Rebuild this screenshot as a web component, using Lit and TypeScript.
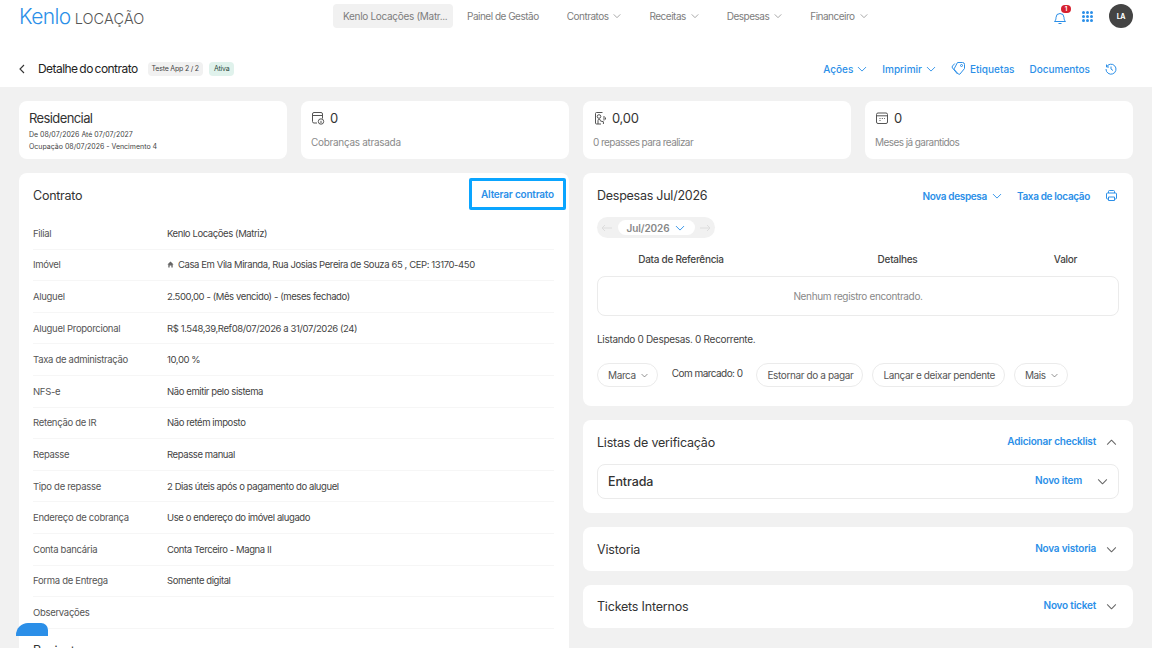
import { LitElement, html, css, svg } from "lit";
import { customElement } from "lit/decorators.js";

const chevron = (size = 10, color = "#2b8fe8") => html`<svg class="chev" width=${size} height=${size} viewBox="0 0 12 12" fill="none" stroke=${color} stroke-width="1.1" stroke-linecap="round" stroke-linejoin="round"><path d="M1.5 4l4.5 4.5L10.5 4"/></svg>`;

const contractRows: [string, string][] = [
  ["Filial", "Kenlo Locações (Matriz)"],
  ["Imóvel", "Casa Em Vila Miranda, Rua Josias Pereira de Souza 65 , CEP: 13170-450"],
  ["Aluguel", "2.500,00 - (Mês vencido) - (meses fechado)"],
  ["Aluguel Proporcional", "R$ 1.548,39,Ref08/07/2026 a 31/07/2026 (24)"],
  ["Taxa de administração", "10,00 %"],
  ["NFS-e", "Não emitir pelo sistema"],
  ["Retenção de IR", "Não retém imposto"],
  ["Repasse", "Repasse manual"],
  ["Tipo de repasse", "2 Dias úteis após o pagamento do aluguel"],
  ["Endereço de cobrança", "Use o endereço do imóvel alugado"],
  ["Conta bancária", "Conta Terceiro - Magna II"],
  ["Forma de Entrega", "Somente digital"],
  ["Observações", ""],
];

const navItems = [
  { label: "Painel de Gestão", menu: false },
  { label: "Contratos", menu: true },
  { label: "Receitas", menu: true },
  { label: "Despesas", menu: true },
  { label: "Financeiro", menu: true },
];

const statIcons = {
  late: svg`<path d="M6 12H3a1.5 1.5 0 01-1.500-1.500v-7.500A1.500 1.500 0 013 1.500h7a1.500 1.500 0 011.500 1.500v4.500"/><path d="M1.500 4.500h10"/><circle cx="10" cy="10.500" r="2.700"/><path d="M10 10v2M10 8.900v.3"/>`,
  transfer: svg`<path d="M9.500 1.500H3.500a1 1 0 00-1 1v9.500a1 1 0 001 1H8"/><circle cx="6" cy="5.500" r="1.800"/><path d="M5 13V9.500a1.200 1.200 0 012.400 0V10l3 .7v2.300M11 5v4.500M12.500 6.500v2"/>`,
  months: svg`<rect x="1.500" y="2" width="11" height="10.500" rx="1.500"/><path d="M1.500 4.800h11M4.500 7.500h1M6.800 7.500h1M9 7.500h.8M4.500 9.500h1"/>`,
};

@customElement("app-root")
export class AppRoot extends LitElement {
  static styles = css`
    :host {
      display: block;
      height: 648px;
      overflow: hidden;
      position: relative;
      background: #f1f1f1;
      font-family: Inter, "Open Sans", sans-serif;
      color: #3a3a3a;
      letter-spacing: -0.25px;
    }
    .top {
      background: #fff;
      height: 87px;
      display: flex;
      flex-direction: column;
    }
    .nav {
      height: 50px;
      display: flex;
      align-items: center;
      padding: 0 19px 18px;
      box-sizing: border-box;
    }
    .logo {
      display: flex;
      align-items: baseline;
      gap: 4px;
      width: 314px;
    }
    .logo .kenlo {
      font-size: 21px;
      color: #2b8fe8;
      letter-spacing: -0.6px;
      font-weight: 300;
    }
    .logo .loc {
      font-size: 14.5px;
      color: #555;
      letter-spacing: 0.1px;
      font-weight: 300;
    }
    .menu {
      display: flex;
      align-items: center;
      font-size: 10px;
      color: #7d7d7d;
      letter-spacing: -0.5px;
    }
    .menu .active {
      background: #f1f1f1;
      border-radius: 4px;
      height: 24px;
      width: 120px;
      box-sizing: border-box;
      padding-left: 10px;
      display: flex;
      align-items: center;
      margin-right: 14px;
      letter-spacing: -0.3px;
    }
    .menu .item {
      display: flex;
      align-items: center;
      gap: 5px;
      margin-right: 28px;
    }
    .nav-right {
      margin-left: auto;
      display: flex;
      align-items: center;
    }
    .bell {
      position: relative;
      width: 14px;
      height: 14px;
      margin-right: 15px;
    }
    .badge {
      position: absolute;
      top: -4px;
      left: 8px;
      width: 10px;
      height: 8px;
      border-radius: 4px;
      background: #d6202f;
      color: #fff;
      font-size: 6px;
      font-weight: 700;
      line-height: 8px;
      text-align: center;
    }
    .dots {
      display: grid;
      grid-template-columns: repeat(3, 3px);
      gap: 1px;
      margin-right: 16px;
      width: 11px;
    }
    .dots i {
      width: 3px;
      height: 3px;
      background: #2b8fe8;
      border-radius: 50%;
    }
    .avatar {
      width: 24px;
      height: 24px;
      border-radius: 50%;
      background: #444;
      color: #fff;
      font-size: 7px;
      font-weight: 700;
      display: flex;
      align-items: center;
      justify-content: center;
    }
    .sub {
      flex: 1;
      display: flex;
      align-items: center;
      padding: 0 35px 0 19px;
    }
    .back {
      margin-right: 13px;
      display: flex;
    }
    .sub h1 {
      margin: 0 10px 0 0;
      font-size: 12px;
      font-weight: 400;
      color: #222;
      letter-spacing: -0.55px;
      word-spacing: -1px;
    }
    .tag {
      font-size: 7px;
      height: 14px;
      line-height: 14px;
      padding: 0 4px;
      border-radius: 4px;
      background: #f1f1f1;
      margin-right: 6px;
      color: #444;
      letter-spacing: -0.2px;
    }
    .tag.green {
      background: #e0f2ec;
      color: #2c4a40;
      padding: 0 5px;
    }
    .actions {
      margin-left: auto;
      display: flex;
      align-items: center;
      font-size: 10px;
      font-weight: 500;
      color: #2b8fe8;
      letter-spacing: 0;
    }
    .actions span {
      display: flex;
      align-items: center;
      gap: 4px;
      margin-right: 15px;
    }
    .grid {
      display: grid;
      grid-template-columns: 1fr 1fr;
      gap: 14px;
      padding: 14px 19px;
    }
    .stats {
      display: grid;
      grid-template-columns: 1fr 1fr;
      gap: 14px;
    }
    .card {
      background: #fff;
      border-radius: 8px;
    }
    .stat {
      height: 58px;
      box-sizing: border-box;
      padding: 9px 10px;
    }
    .stat h2 {
      margin: 0 0 2.6px;
      font-size: 13px;
      font-weight: 400;
      line-height: 16px;
      color: #333;
      letter-spacing: -0.6px;
    }
    .stat small {
      display: block;
      font-size: 7px;
      line-height: 12.5px;
      color: #444;
      letter-spacing: 0;
    }
    .stat .val {
      display: flex;
      align-items: center;
      gap: 5px;
      font-size: 13px;
      line-height: 16px;
      color: #333;
      margin-bottom: 9px;
    }
    .stat .lbl {
      font-size: 10px;
      line-height: 14px;
      color: #8a8a8a;
      letter-spacing: -0.3px;
    }
    .stat .lbl.tight {
      letter-spacing: -0.57px;
    }
    .col {
      display: flex;
      flex-direction: column;
      gap: 14px;
    }
    .contract {
      padding: 5px 15px 0 14px;
      height: 500px;
    }
    .card-head {
      display: flex;
      align-items: center;
      justify-content: space-between;
      height: 32px;
      margin-bottom: 8px;
    }
    .card-title {
      font-size: 12.5px;
      color: #333;
      font-weight: 400;
    }
    .card-head .card-title {
      padding-top: 2px;
    }
    .focus-btn {
      font-size: 10px;
      font-weight: 600;
      color: #2b8fe8;
      border: 3px solid #0aa5ff;
      border-radius: 2px;
      height: 32px;
      width: 97px;
      box-sizing: border-box;
      margin-right: -12px;
      display: flex;
      align-items: center;
      justify-content: center;
      letter-spacing: -0.2px;
    }
    .row {
      display: flex;
      align-items: center;
      height: 31.6px;
      box-sizing: border-box;
      border-bottom: 1px solid #f6f6f6;
      font-size: 9.5px;
      letter-spacing: -0.4px;
    }
    .row .k {
      width: 134px;
      color: #555;
      letter-spacing: -0.3px;
    }
    .row .v {
      color: #444;
      display: flex;
      align-items: center;
      gap: 4px;
    }
    .next {
      margin-top: 14px;
      font-size: 12.5px;
      color: #333;
    }
    .fab {
      position: absolute;
      left: 16px;
      top: 623px;
      width: 32px;
      height: 13px;
      background: #2b8fe8;
      border-radius: 12px 7px 0 0;
    }
    .expenses {
      height: 233px;
      box-sizing: border-box;
      padding: 14px;
    }
    .exp-head {
      display: flex;
      align-items: center;
      height: 17px;
      margin-bottom: 13px;
    }
    .links {
      margin-left: auto;
      display: flex;
      align-items: center;
      font-size: 10px;
      font-weight: 600;
      color: #2b8fe8;
      letter-spacing: -0.35px;
      margin-right: 1px;
    }
    .links span {
      display: flex;
      align-items: center;
      gap: 5px;
      margin-right: 15px;
    }
    .month {
      width: 118px;
      height: 21px;
      box-sizing: border-box;
      border-radius: 11px;
      background: #f1f1f1;
      display: flex;
      align-items: center;
      justify-content: space-between;
      padding: 0 4px;
    }
    .month b {
      width: 77px;
      height: 15px;
      border-radius: 8px;
      background: #fff;
      font-size: 10px;
      font-weight: 600;
      color: #888;
      display: flex;
      align-items: center;
      justify-content: center;
      gap: 6px;
      letter-spacing: -0.1px;
    }
    .thead {
      display: grid;
      grid-template-columns: 168px 265px 71px;
      font-size: 10px;
      font-weight: 500;
      color: #444;
      height: 15px;
      align-items: center;
      margin-top: 13px;
      margin-bottom: 10px;
      letter-spacing: -0.28px;
    }
    .thead span {
      text-align: center;
    }
    .empty {
      height: 40px;
      box-sizing: border-box;
      border: 1px solid #ebebeb;
      border-radius: 8px;
      display: flex;
      align-items: center;
      justify-content: center;
      font-size: 10px;
      color: #888;
      letter-spacing: -0.35px;
    }
    .count {
      font-size: 10px;
      color: #444;
      margin: 17px 0 17px;
      line-height: 13px;
      letter-spacing: -0.3px;
    }
    .bulk {
      display: flex;
      align-items: center;
      font-size: 10px;
      color: #555;
      letter-spacing: -0.38px;
    }
    .pill {
      height: 24px;
      box-sizing: border-box;
      border: 1px solid #ebebeb;
      border-radius: 12px;
      padding: 0 9px 0 10px;
      display: flex;
      align-items: center;
      gap: 5px;
    }
    .pill + .pill {
      margin-left: 9px;
    }
    .marked {
      margin: 0 14px 4px;
      letter-spacing: -0.55px;
      color: #444;
    }
    .check {
      height: 93px;
      box-sizing: border-box;
      padding: 0 14px;
    }
    .sec-head {
      display: flex;
      align-items: center;
      height: 44px;
      font-size: 12.5px;
      color: #333;
      letter-spacing: -0.2px;
    }
    .inner {
      height: 35px;
      box-sizing: border-box;
      border: 1px solid #ebebeb;
      border-radius: 8px;
      display: flex;
      align-items: center;
      padding: 0 10px;
      font-size: 12.5px;
      font-weight: 500;
      color: #333;
      letter-spacing: -0.1px;
    }
    .sec {
      height: 43.5px;
      padding: 0 14px;
    }
    .ml {
      margin-left: auto;
      display: flex;
      align-items: center;
      font-size: 10px;
      font-weight: 600;
      color: #2b8fe8;
      letter-spacing: -0.2px;
    }
    .ml em {
      font-style: normal;
      margin-bottom: 3px;
    }
    .ml .ic {
      display: flex;
      margin-left: 10px;
      margin-right: 2px;
    }
    .ml .ic.up {
      transform: rotate(180deg);
    }
    .ml .ic.wide {
      margin-left: 15px;
      margin-right: 0;
    }
  `;

  private stat(icon: unknown, value: string, label: string, tight = false) {
    return html`<div class="card stat">
      <div class="val">
        <svg width="14" height="14" viewBox="0 0 14 14" fill="none" stroke="#555" stroke-width="1">${icon}</svg>${value}
      </div>
      <div class="lbl ${tight ? "tight" : ""}">${label}</div>
    </div>`;
  }

  private renderNav() {
    return html`<div class="nav">
      <div class="logo"><span class="kenlo">Kenlo</span><span class="loc">LOCAÇÃO</span></div>
      <div class="menu">
        <div class="active">Kenlo Locações (Matr...</div>
        ${navItems.map((n) => html`<div class="item">${n.label}${n.menu ? chevron(8, "#888") : ""}</div>`)}
      </div>
      <div class="nav-right">
        <div class="bell">
          <svg width="14" height="14" viewBox="0 0 14 14" fill="none" stroke="#2b8fe8" stroke-width="1"><path d="M1.5 10.500c1-1 1.500-2 1.500-4a4 4 0 018 0c0 2 .5 3 1.500 4zM5.500 12.500h3"/></svg>
          <span class="badge">1</span>
        </div>
        <div class="dots">${Array.from({ length: 9 }, () => html`<i></i>`)}</div>
        <div class="avatar">LA</div>
      </div>
    </div>`;
  }

  private renderSub() {
    return html`<div class="sub">
      <span class="back"><svg width="6" height="10" viewBox="0 0 6 10" fill="none" stroke="#333" stroke-width="1.1"><path d="M5 1L1 5l4 4"/></svg></span>
      <h1>Detalhe do contrato</h1>
      <span class="tag">Teste App 2 / 2</span>
      <span class="tag green">Ativa</span>
      <div class="actions">
        <span>Ações ${chevron()}</span>
        <span>Imprimir ${chevron()}</span>
        <span>
          <svg width="15" height="15" viewBox="0 0 15 15" fill="none" stroke="#2b8fe8" stroke-width="1" stroke-linejoin="round"><path d="M6.500 1.500h5a2 2 0 012 2v4L9 13a1.200 1.200 0 01-1.700 0L3.500 8.800a1.200 1.200 0 010-1.700z"/><path d="M3.800 2.500L1.500 5a1.500 1.500 0 000 2l5 6"/><circle cx="10.500" cy="4.500" r="1"/></svg>
          Etiquetas
        </span>
        <span>Documentos</span>
        <svg width="12" height="12" viewBox="0 0 12 12" fill="none" stroke="#2b8fe8" stroke-width="1"><path d="M1.500 4a5 5 0 11-.5 2M1.500 1.500V4H4M6 3.500V6l2 1.500"/></svg>
      </div>
    </div>`;
  }

  private renderContract() {
    return html`<div class="card contract">
      <div class="card-head">
        <span class="card-title">Contrato</span>
        <span class="focus-btn">Alterar contrato</span>
      </div>
      ${contractRows.map(
        ([k, v]) => html`<div class="row">
          <span class="k">${k}</span>
          <span class="v">
            ${k === "Imóvel"
              ? html`<svg width="7" height="7" viewBox="0 0 8 8" fill="#666"><path d="M4 .5L.5 4h1v3.500H3V5h2v2.500h1.500V4h1z"/></svg>`
              : ""}${v}
          </span>
        </div>`,
      )}
      <div class="next">Reajuste</div>
    </div>`;
  }

  private renderExpenses() {
    return html`<div class="card expenses">
      <div class="exp-head">
        <span class="card-title">Despesas Jul/2026</span>
        <div class="links">
          <span>Nova despesa ${chevron()}</span>
          <span>Taxa de locação</span>
          <svg width="13" height="13" viewBox="0 0 13 13" fill="none" stroke="#2b8fe8" stroke-width="1"><path d="M3.500 4V2.500a1 1 0 011-1h4a1 1 0 011 1V4M3.500 10H2.500a1 1 0 01-1-1V5a1 1 0 011-1h8a1 1 0 011 1v4a1 1 0 01-1 1h-1M3.500 8h6v3.500h-6z"/></svg>
        </div>
      </div>
      <div class="month">
        <svg width="12" height="8" viewBox="0 0 12 8" fill="none" stroke="#ddd" stroke-width="1"><path d="M11 4H1M4 1L1 4l3 3"/></svg>
        <b>Jul/2026 ${chevron()}</b>
        <svg width="12" height="8" viewBox="0 0 12 8" fill="none" stroke="#ddd" stroke-width="1"><path d="M1 4h10M8 1l3 3-3 3"/></svg>
      </div>
      <div class="thead"><span>Data de Referência</span><span>Detalhes</span><span>Valor</span></div>
      <div class="empty">Nenhum registro encontrado.</div>
      <div class="count">Listando 0 Despesas. 0 Recorrente.</div>
      <div class="bulk">
        <span class="pill">Marca ${chevron(7, "#555")}</span>
        <span class="marked">Com marcado: 0</span>
        <span class="pill">Estornar do a pagar</span>
        <span class="pill">Lançar e deixar pendente</span>
        <span class="pill">Mais ${chevron(7, "#555")}</span>
      </div>
    </div>`;
  }

  private section(title: string, link: string) {
    return html`<div class="card sec">
      <div class="sec-head">
        ${title}
        <span class="ml"><em>${link}</em><span class="ic">${chevron(11, "#666")}</span></span>
      </div>
    </div>`;
  }

  render() {
    return html`
      <div class="top">${this.renderNav()} ${this.renderSub()}</div>
      <div class="grid">
        <div class="stats">
          <div class="card stat">
            <h2>Residencial</h2>
            <small>De 08/07/2026 Até 07/07/2027</small>
            <small>Ocupação 08/07/2026 - Vencimento 4</small>
          </div>
          ${this.stat(statIcons.late, "0", "Cobranças atrasada")}
        </div>
        <div class="stats">
          ${this.stat(statIcons.transfer, "0,00", "0 repasses para realizar", true)}
          ${this.stat(statIcons.months, "0", "Meses já garantidos", true)}
        </div>
        ${this.renderContract()}
        <div class="col">
          ${this.renderExpenses()}
          <div class="card check">
            <div class="sec-head">
              Listas de verificação
              <span class="ml"><em>Adicionar checklist</em><span class="ic up">${chevron(11, "#666")}</span></span>
            </div>
            <div class="inner">
              Entrada
              <span class="ml"><em>Novo item</em><span class="ic wide">${chevron(11, "#666")}</span></span>
            </div>
          </div>
          ${this.section("Vistoria", "Nova vistoria")}
          ${this.section("Tickets Internos", "Novo ticket")}
        </div>
      </div>
      <div class="fab"></div>
    `;
  }
}
